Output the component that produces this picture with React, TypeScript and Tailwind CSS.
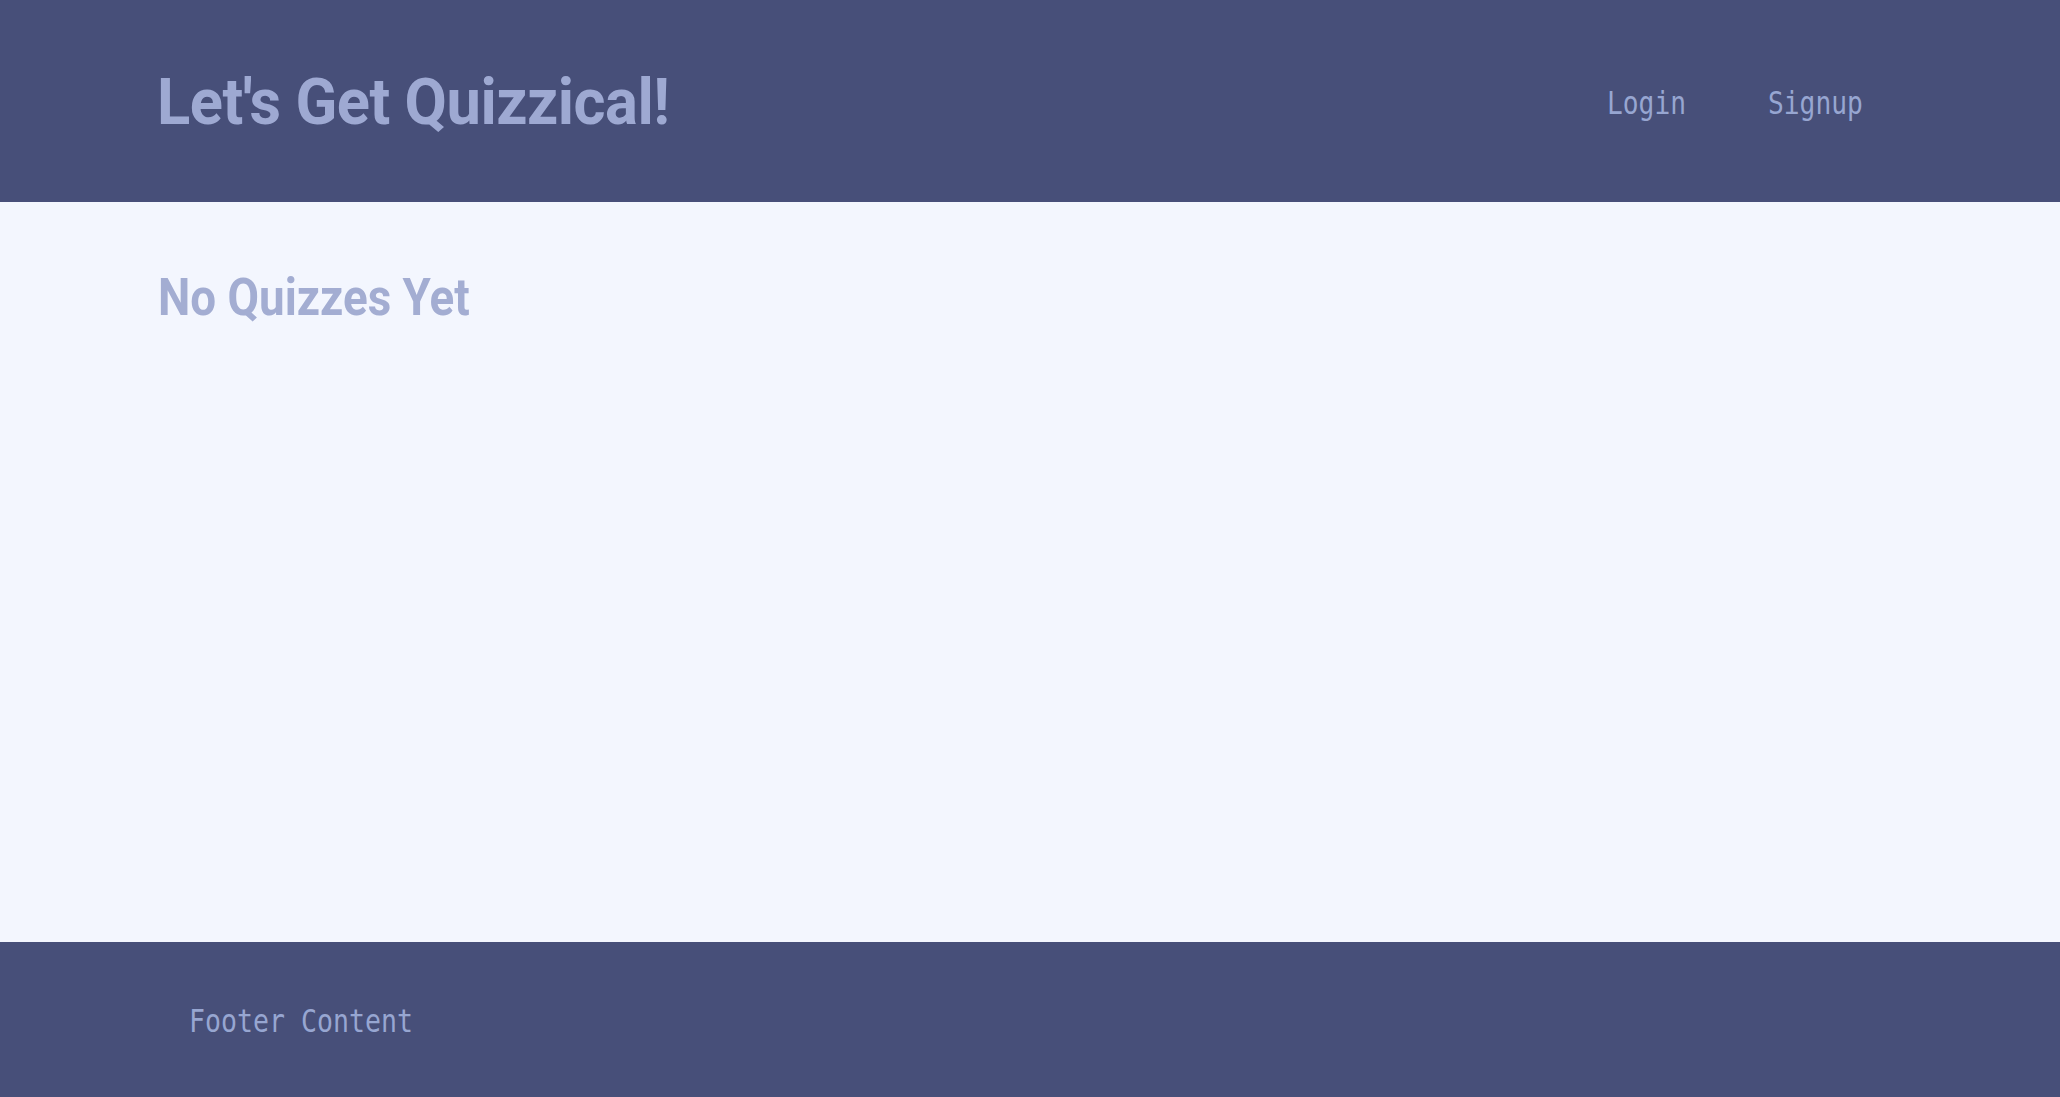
export default function App() {
  return (
    <div className="min-h-screen flex flex-col bg-[#f3f6fe]">
      <header className="h-[202px] shrink-0 bg-[#474f79] flex items-center justify-between pl-[157px] pr-[176px] pt-[3px]">
        <h1 className="inline-block scale-x-[0.96] origin-left text-[64px] leading-none font-bold text-[#9ea9d2] font-['Roboto',sans-serif] tracking-[-0.5px]">
          Let's Get Quizzical!
        </h1>
        <nav className="flex items-center gap-[65px] text-[32px] leading-none text-[#97a6d1] font-['DejaVu_Sans_Mono',monospace]">
          <a href="#" className="inline-block scale-x-[0.82] origin-left">Login</a>
          <a href="#" className="inline-block scale-x-[0.82] origin-left">Signup</a>
        </nav>
      </header>

      <main className="flex-1 pl-[158px] pr-[152px] pt-[70px]">
        <h2 className="inline-block scale-x-[0.88] origin-left text-[52px] leading-none font-bold text-[#a3add2] font-['Roboto',sans-serif]">
          No Quizzes Yet
        </h2>
      </main>

      <footer className="h-[155px] shrink-0 bg-[#474f79] flex items-center pl-[189px] pr-[186px] pt-[2px]">
        <p className="inline-block scale-x-[0.83] origin-left text-[32px] leading-none text-[#97a6d1] font-['DejaVu_Sans_Mono',monospace]">
          Footer Content
        </p>
      </footer>
    </div>
  );
}
